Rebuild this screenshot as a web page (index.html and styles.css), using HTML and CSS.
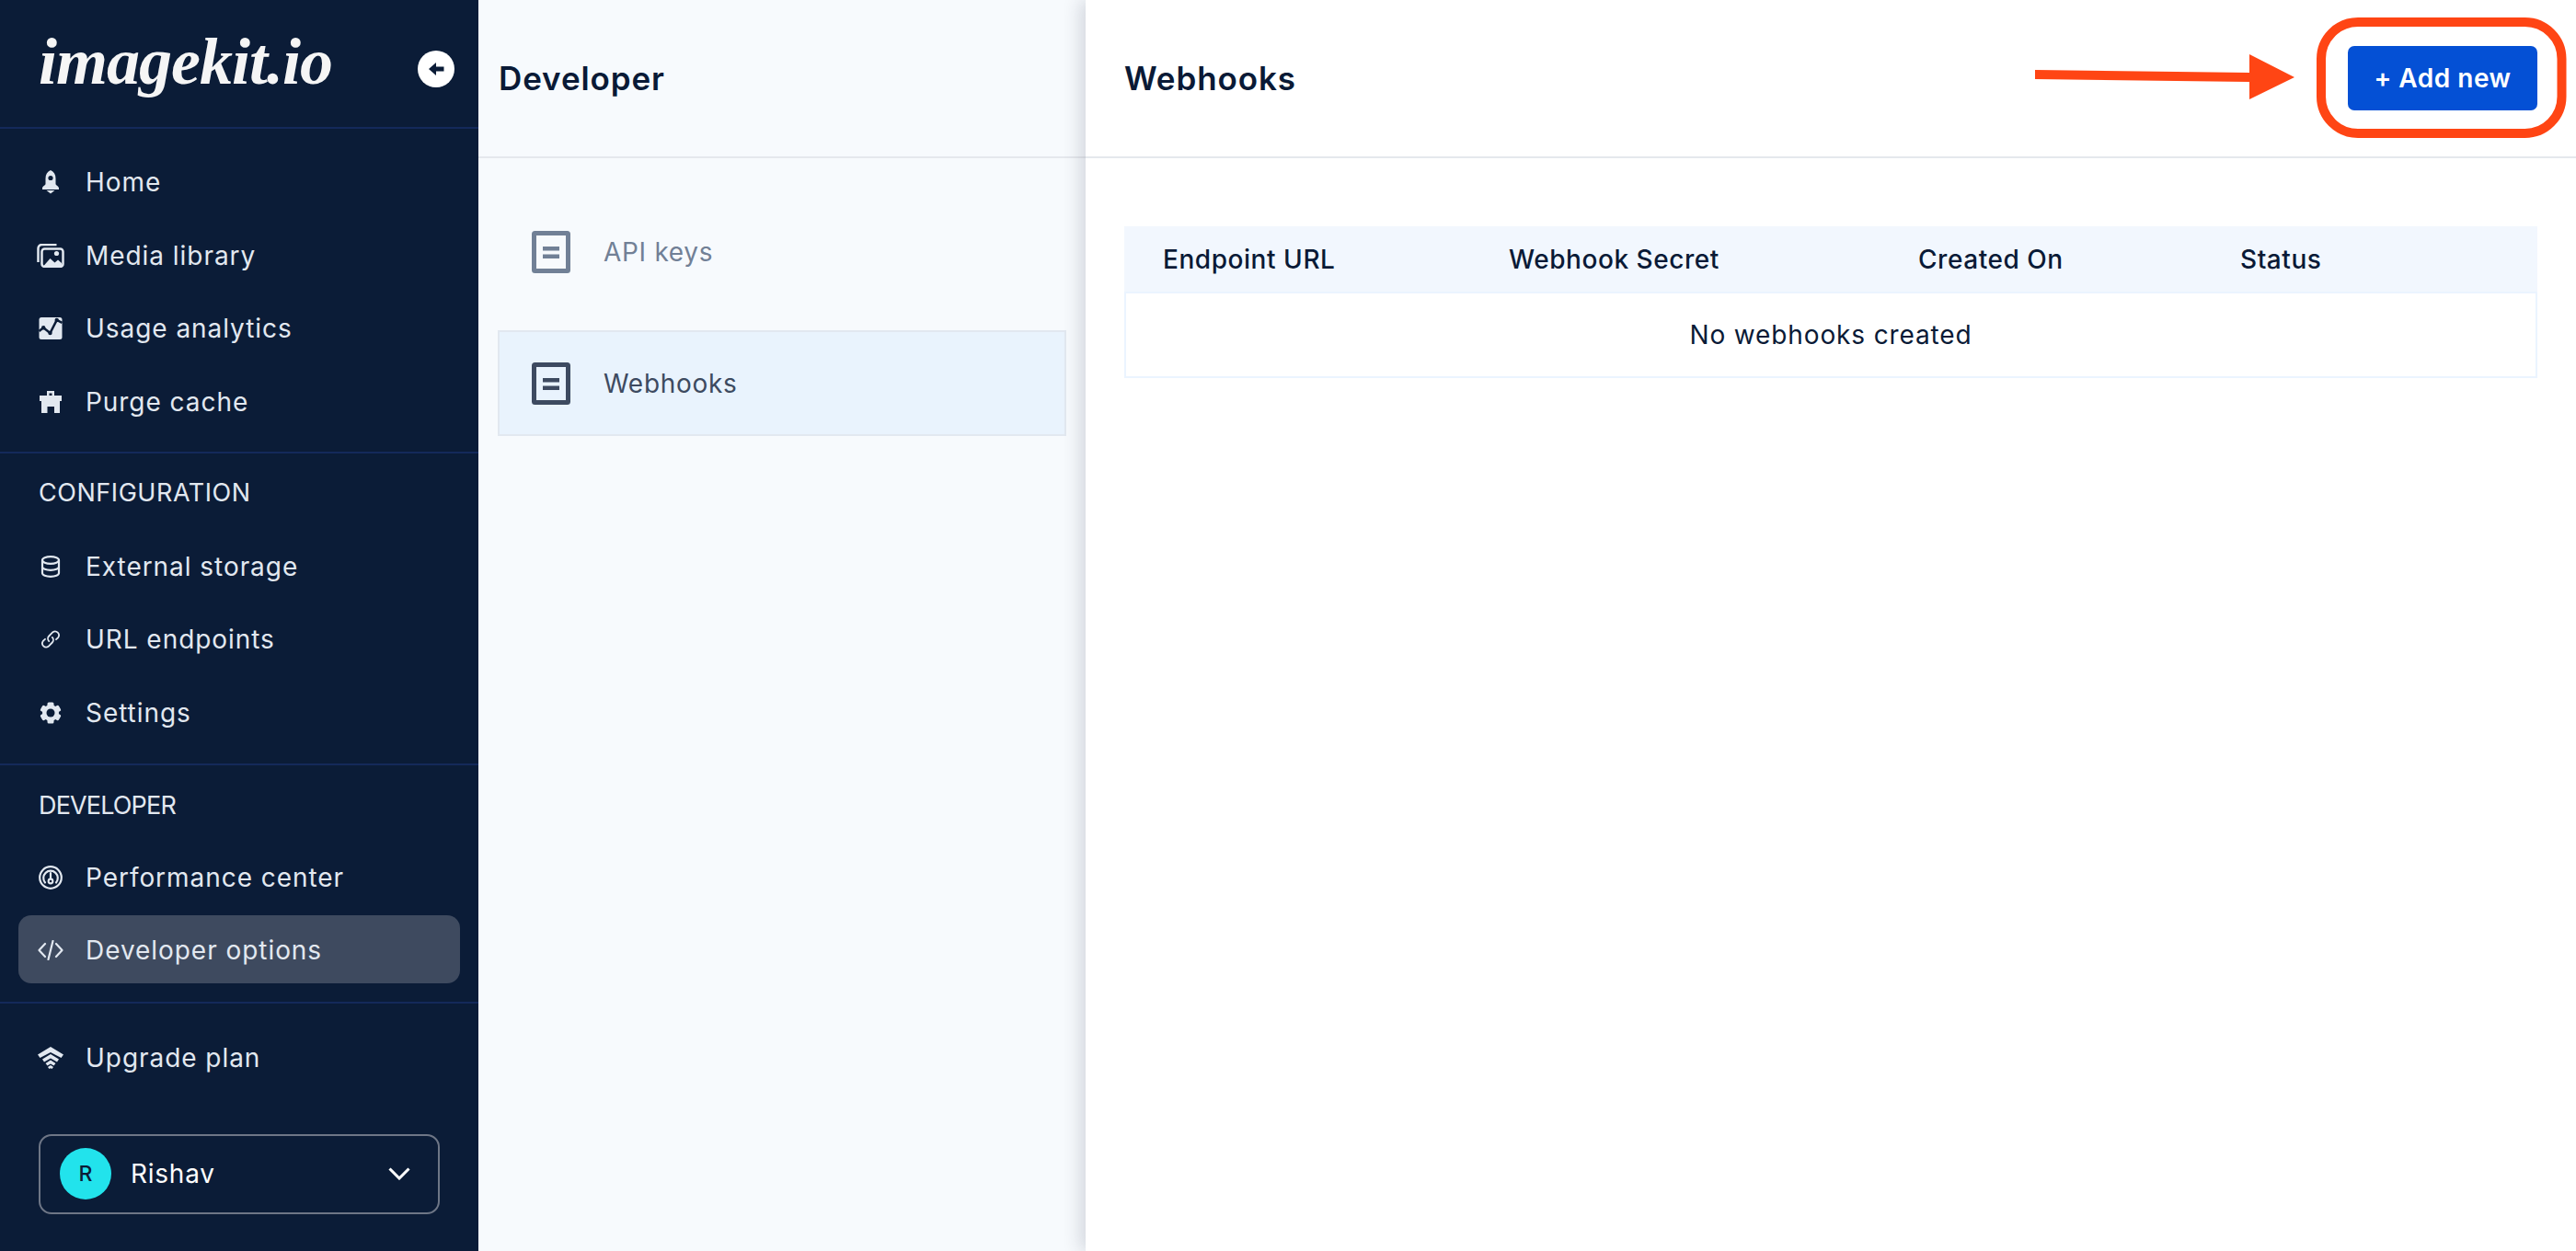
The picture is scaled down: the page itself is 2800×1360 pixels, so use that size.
FILE: index.html
```html
<!DOCTYPE html>
<html lang="en">
<head>
<meta charset="utf-8">
<title>Webhooks</title>
<link rel="stylesheet" href="styles.css">
</head>
<body>
<div class="app">
  <aside class="sidebar">
    <div class="brand">
      <span class="logo">imagekit.io</span>
      <span class="back"><svg width="17" height="16" viewBox="0 0 17 16"><path class="back-ic" d="M0 8l8-7v4.500h8.500v5H8V15z"/></svg></span>
    </div>
    <nav class="section first">
      <a class="item"><span class="ic"><svg width="20" height="26" viewBox="0 0 20 26"><path class="fill" d="M10 0c3.600 1.500 5.500 5 5.500 9v6c0 1.500 3.500 2.500 3.500 4.500V21H1v-1.500C1 17.500 4.500 16.500 4.500 15V9C4.500 5 6.400 1.500 10 0z"/><circle class="hole" cx="10" cy="8.500" r="2.600"/><path class="fill" d="M5.500 22h9L10 25.500z"/></svg></span><span>Home</span></a>
      <a class="item"><span class="ic"><svg width="30" height="26" viewBox="0 0 30 26"><path class="line" d="M1.500 20V5a4 4 0 0 1 4-4h16"/><rect class="line" x="5.500" y="5.500" width="23" height="19.500" rx="3"/><path class="fill" d="M7.500 24l7-8 5 4.500 3.500-3 4 3.500V24z"/><circle class="fill" cx="21.500" cy="10.500" r="2.600"/></svg></span><span>Media library</span></a>
      <a class="item"><span class="ic"><svg width="26" height="26" viewBox="0 0 26 26"><rect class="fill" x="0.500" y="1" width="25" height="24" rx="2.500"/><path class="cut" d="M0.500 16l4.700-3.700 7.300 5.700 7.200-14 5.800 3"/><circle class="hole" cx="5.200" cy="12.300" r="2.200"/><circle class="hole" cx="12.500" cy="18" r="2.200"/><circle class="hole" cx="19.700" cy="4" r="2.200"/></svg></span><span>Usage analytics</span></a>
      <a class="item"><span class="ic"><svg width="26" height="26" viewBox="0 0 26 26"><path class="fill" fill-rule="evenodd" d="M9 1h8v5h8v6h-2v13h-6v-7H9.500v7H3V12H1V6h8zM11.500 3.500V6h3V3.500z"/></svg></span><span>Purge cache</span></a>
    </nav>
    <nav class="section section-config">
      <div class="label">CONFIGURATION</div>
      <a class="item"><span class="ic"><svg width="22" height="24" viewBox="0 0 22 24"><ellipse class="thin" cx="11" cy="5" rx="9" ry="3.800"/><path class="thin" d="M2 5v14c0 2.200 4 3.800 9 3.800s9-1.600 9-3.800V5M2 12c0 2.200 4 3.800 9 3.800s9-1.600 9-3.800"/></svg></span><span>External storage</span></a>
      <a class="item"><span class="ic"><svg width="22" height="22" viewBox="0 0 22 22"><path class="slim" d="M9.200 13.100a4 4 0 0 1 0-5.600l4.200-4.300a4.200 4.200 0 0 1 5.800 5.900l-2.200 2.100"/><path class="slim" d="M12.800 8.900a4 4 0 0 1 0 5.600l-4.200 4.300a4.200 4.200 0 0 1-5.800-5.900L5 10.800"/></svg></span><span>URL endpoints</span></a>
      <a class="item"><span class="ic"><svg width="24" height="24" viewBox="0 0 24 24"><circle class="fill" cx="12" cy="12" r="9"/><g class="gear-teeth"><rect x="8.500" y="0.500" width="7" height="23" rx="1.500"/><rect x="8.500" y="0.500" width="7" height="23" rx="1.500" transform="rotate(60 12 12)"/><rect x="8.500" y="0.500" width="7" height="23" rx="1.500" transform="rotate(120 12 12)"/></g><circle class="hole" cx="12" cy="12" r="4.500"/></svg></span><span>Settings</span></a>
    </nav>
    <nav class="section section-dev">
      <div class="label label-tight">DEVELOPER</div>
      <a class="item"><span class="ic"><svg width="26" height="26" viewBox="0 0 26 26"><circle class="thin" cx="13" cy="13" r="11.800"/><path class="thin" d="M7 18.500A7.800 7.800 0 1 1 19 18.500"/><path class="thin" d="M13 8v6"/><circle class="fill" cx="13" cy="17" r="3.400"/><circle class="hole" cx="13" cy="17" r="1.300"/></svg></span><span>Performance center</span></a>
      <a class="item active"><span class="ic"><svg width="28" height="22" viewBox="0 0 28 22"><path class="thin" d="M8 4l-6.500 7L8 18M20 4l6.500 7L20 18M16.500 1l-5 20"/></svg></span><span>Developer options</span></a>
    </nav>
    <nav class="section upgrade">
      <a class="item"><span class="ic"><svg width="28" height="24" viewBox="0 0 28 24"><path class="fill" d="M14 0l14 8.500-2.500 3.500L14 6 2.500 12 0 8.500z"/><path class="fill" d="M14 8l9 5.500-2 3-7-4-7 4-2-3z"/><path class="fill" d="M14 14.500l5.500 3.500-2 2.500-3.500-2-3.500 2-2-2.500z"/><path class="fill" d="M14 20l3 2-1.500 2-1.500-.8-1.500.8-1.500-2z"/></svg></span><span>Upgrade plan</span></a>
    </nav>
    <div class="account">
      <span class="avatar">R</span>
      <span class="account-name">Rishav</span>
      <svg class="chev" width="24" height="14" viewBox="0 0 24 14"><path d="M1.500 1.500L12 12 22.500 1.500"/></svg>
    </div>
  </aside>
  <section class="middle">
    <header class="head"><h2 class="title">Developer</h2></header>
    <div class="subnav">
      <a class="sub muted"><svg class="doc" width="42" height="46" viewBox="0 0 42 46"><rect x="2.500" y="2.500" width="37" height="41" rx="1"/><path d="M12 17h18v4.500H12zM12 25.500h18V30H12z" class="docbar"/></svg><span>API keys</span></a>
      <a class="sub selected"><svg class="doc" width="42" height="46" viewBox="0 0 42 46"><rect x="2.500" y="2.500" width="37" height="41" rx="1"/><path d="M12 17h18v4.500H12zM12 25.500h18V30H12z" class="docbar"/></svg><span>Webhooks</span></a>
    </div>
  </section>
  <main class="main">
    <header class="head head-main">
      <h2 class="title">Webhooks</h2>
      <button class="add">+ Add new</button>
    </header>
    <div class="content">
      <div class="thead">
        <span>Endpoint URL</span><span>Webhook Secret</span><span>Created On</span><span>Status</span>
      </div>
      <div class="empty">No webhooks created</div>
    </div>
    <svg class="mark" width="590" height="150" viewBox="0 0 590 150">
      <path class="mark-arrow" d="M2 57L235 60V70L2 67zM235 40L284 65 235 89z"/>
      <rect class="mark-ring" x="313" y="5" width="261.500" height="121" rx="40"/>
    </svg>
  </main>
</div>
</body>
</html>
```
FILE: styles.css
```css
* { box-sizing: border-box; }
html, body { margin: 0; height: 100%; }
body { font-family: "Inter", "Noto Sans", sans-serif; color: #0a1a36; background: #fff; }
.app { display: flex; height: 1360px; overflow: hidden; }

.sidebar { width: 520px; flex: none; background: #0b1c37; display: flex; flex-direction: column; color: #e2e8f0; }
.brand { height: 138px; display: flex; align-items: flex-start; justify-content: space-between; padding: 27px 26px 0 42px; }
.logo { font-family: "Liberation Serif", serif; font-style: italic; font-weight: 700; font-size: 72px; line-height: 80px; color: #f5f5f5; letter-spacing: -1px; }
.back { width: 40px; height: 40px; margin-top: 28px; border-radius: 50%; background: #fff; display: flex; align-items: center; justify-content: center; }
.back-ic { fill: #0b1c37; }

.section { padding: 0 20px 18px; border-top: 2px solid #14295a; display: flex; flex-direction: column; gap: 5.670px; }
.section.first { padding-top: 20px; padding-bottom: 18px; }
.section-config { padding-bottom: 19px; }
.section-dev { padding-bottom: 20px; }
.section.upgrade { padding-top: 21px; padding-bottom: 0; }
.label { height: 42px; margin: 22px 0 15px 22px; font-size: 27px; line-height: 42px; letter-spacing: .55px; color: #e2e8f0; }
.label-tight { letter-spacing: -.85px; margin: 23px 0 13px 22px; }
.item { height: 74px; border-radius: 14px; padding: 2px 0 0 20px; display: flex; align-items: center; gap: 23px; font-size: 28px; letter-spacing: .95px; }
.item.active { background: #3e4a5f; }
.ic { width: 30px; flex: none; display: flex; align-items: center; justify-content: center; }
.fill { fill: #e2e8f0; }
.gear-teeth { fill: #e2e8f0; }
.hole { fill: #0b1c37; }
.line { fill: none; stroke: #e2e8f0; stroke-width: 2.500; }
.thin { fill: none; stroke: #e2e8f0; stroke-width: 2.200; stroke-linecap: round; stroke-linejoin: round; }
.slim { fill: none; stroke: #e2e8f0; stroke-width: 1.800; stroke-linecap: round; }
.cut { fill: none; stroke: #0b1c37; stroke-width: 2.500; }

.account { margin: 46.500px 0 0 42px; width: 436px; height: 87px; border: 2px solid #6e7686; border-radius: 14px; display: flex; align-items: center; padding: 0 30px 0 21px; }
.avatar { width: 56px; height: 56px; flex: none; border-radius: 50%; background: #22e3ec; color: #0b1c37; font-size: 23px; font-weight: 500; display: flex; align-items: center; justify-content: center; }
.account-name { margin-left: 21px; font-size: 28px; letter-spacing: .75px; color: #fff; flex: 1; }
.chev { fill: none; stroke: #fff; stroke-width: 3; }

.middle { width: 660px; flex: none; background: #f7fafd; }
.head { height: 172px; border-bottom: 2px solid #e5e8ed; display: flex; align-items: center; padding: 0 22px; }
.title { margin: 0; font-size: 35px; font-weight: 600; letter-spacing: .9px; color: #0a1a36; }
.subnav { padding: 44px 21px 0 21px; display: flex; flex-direction: column; }
.sub { height: 115px; display: flex; align-items: center; gap: 36px; padding-left: 35px; font-size: 28px; letter-spacing: .7px; border: 2px solid transparent; }
.sub + .sub { margin-top: 28px; }
.muted { color: #718096; }
.selected { color: #3d4a60; background: #e9f3fd; border-color: #e2e8f0; }
.doc { flex: none; }
.doc rect { fill: none; stroke: currentColor; stroke-width: 5; }
.docbar { fill: currentColor; }

.main { flex: 1; position: relative; background: #fff; box-shadow: -6px 0 18px rgba(30, 40, 60, .16); }
.head-main { justify-content: space-between; padding: 0 42px; }
.add { width: 206px; height: 70px; border: 0; border-radius: 7px; background: #0450d5; color: #fff; font-family: inherit; font-size: 28px; font-weight: 600; letter-spacing: .5px; }
.content { padding: 74px 42px 0; }
.thead { height: 71px; background: #f2f7fe; display: grid; grid-template-columns: 376px 445px 350px 1fr; align-items: center; padding-left: 42px; font-size: 28px; font-weight: 500; letter-spacing: .55px; }
.empty { height: 94px; border: 2px solid #ebf4ff; display: flex; align-items: center; justify-content: center; font-size: 28px; letter-spacing: .87px; }
.mark { position: absolute; left: 1030px; top: 19px; }
.mark-arrow { fill: #ff4514; }
.mark-ring { fill: none; stroke: #ff4514; stroke-width: 10; }
```
